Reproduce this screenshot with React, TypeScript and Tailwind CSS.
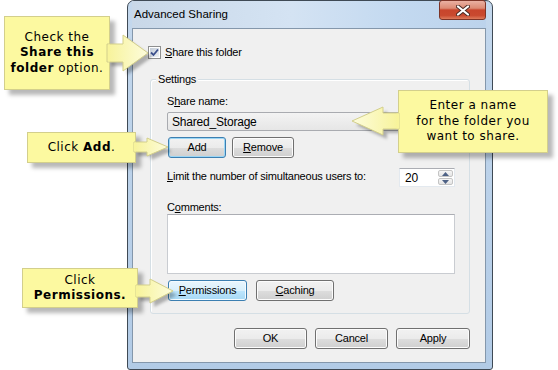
import React from "react";

const ui = "font-['Liberation_Sans',Arial,sans-serif] text-[11px] tracking-[-0.2px] text-black";
const note = "font-['DejaVu_Sans',Verdana,sans-serif] text-[12px] tracking-[0.5px] leading-[15.5px] text-black";

// arrow outlines, in page coordinates
const arrows = [
  "107,44 123,44 123,35 148,53 123,71 123,62 107,62",
  "399,113 383,113 383,107 352,121 383,135 383,129 399,129",
  "134,142 147,142 147,138 168,147 147,156 147,152 134,152",
  "136,285 150,285 150,279 173,291 150,303 150,297 136,297",
];

function Btn({
  children,
  w,
  kind = "normal",
}: {
  children: React.ReactNode;
  w: string;
  kind?: "normal" | "focus" | "hover";
}) {
  const look =
    kind === "hover"
      ? "border-[#3c7fb1] bg-[linear-gradient(#eaf6fd,#d9f0fc_50%,#bee6fd_51%,#a7d9f5)] shadow-[inset_0_0_0_1px_#f4fbff]"
      : kind === "focus"
        ? "border-[#3c7fb1] bg-[linear-gradient(#f2f2f2,#ebebeb_50%,#dddddd_51%,#cfcfcf)] shadow-[inset_0_0_0_1px_#9bd6f5]"
        : "border-[#707070] bg-[linear-gradient(#f2f2f2,#ebebeb_50%,#dddddd_51%,#cfcfcf)] shadow-[inset_0_0_0_1px_#fcfcfc]";
  return (
    <div className={`flex h-[21px] ${w} items-center justify-center rounded-[3px] border ${look}`}>
      {children}
    </div>
  );
}

function Checkbox() {
  return (
    <div className="flex h-[13px] w-[13px] items-center justify-center border border-[#8e8f8f] bg-white p-[1px]">
      <div className="flex h-full w-full items-center justify-center bg-[linear-gradient(135deg,#c3ccd8,#eef1f4)]">
        <svg width="9" height="9" viewBox="0 0 9 9">
          <path d="M1 4.5 L3.5 7 L8 1.5" fill="none" stroke="#3b4f8c" strokeWidth="1.8" />
        </svg>
      </div>
    </div>
  );
}

function Spinner() {
  return (
    <div className="flex h-[19px] w-[56px] items-stretch border border-[#e3e9ef] border-t-[#abadb3] bg-white">
      <div className="flex flex-1 items-center pl-[5px] text-[12px]">20</div>
      <div className="flex w-[17px] flex-col gap-[1px] p-[1px]">
        <div className="flex flex-1 items-center justify-center rounded-[2px] border border-[#c4c4c4] bg-[linear-gradient(#f6f6f6,#e4e4e4)]">
          <svg width="7" height="4" viewBox="0 0 7 4">
            <path d="M0 4 L3.5 0 L7 4 Z" fill="#4d6185" />
          </svg>
        </div>
        <div className="flex flex-1 items-center justify-center rounded-[2px] border border-[#c4c4c4] bg-[linear-gradient(#f6f6f6,#e4e4e4)]">
          <svg width="7" height="4" viewBox="0 0 7 4">
            <path d="M0 0 L7 0 L3.5 4 Z" fill="#4d6185" />
          </svg>
        </div>
      </div>
    </div>
  );
}

function Window() {
  return (
    <div className={`absolute left-[127px] top-0 flex h-[370px] w-[366px] flex-col rounded-t-[7px] rounded-b-[3px] border border-[#3f4a55] bg-[linear-gradient(180deg,#c4d8ed,#b2cbe6)] pl-[4px] pr-[6px] pb-[6px] ${ui}`}>
      {/* title bar */}
      <div className="flex h-[27px] items-center bg-[linear-gradient(90deg,#c9d8e8,#d4e3f3_45%,#c3d9f0_75%,#bcd3ec)] pl-[2px] text-[11.5px] tracking-normal">
        Advanced Sharing
      </div>
      <div className="absolute right-[6px] top-[-1px] flex h-[20px] w-[47px] items-center justify-center rounded-[3px] border border-[#7d3427] bg-[linear-gradient(#eab0a2,#dc8a74_40%,#c8452c_50%,#c9492f_80%,#de7b5c)]">
        <svg width="14" height="11" viewBox="0 0 14 11">
          <path d="M2 1.5 L12 9.5 M12 1.5 L2 9.5" stroke="#4a2a24" strokeWidth="4" strokeLinecap="round" />
          <path d="M2 1.5 L12 9.5 M12 1.5 L2 9.5" stroke="#ffffff" strokeWidth="2.2" strokeLinecap="round" />
        </svg>
      </div>

      {/* client area */}
      <div className="flex flex-1 flex-col border border-[#8497ab] bg-[#f0f0f0] pt-[17px]">
        <div className="flex h-[13px] items-center gap-[4px] pl-[15px] leading-[13px]">
          <Checkbox />
          <span>
            <span className="underline">S</span>hare this folder
          </span>
        </div>

        {/* Settings group */}
        <div className="relative ml-[17px] mt-[20px] flex h-[235px] w-[320px] flex-col rounded-[3px] border border-[#d5dfe5] pl-[16px] pt-[14px] shadow-[inset_1px_1px_0_#ffffff]">
          <span className="absolute left-[5px] top-[-8px] bg-[#f0f0f0] px-[2px] leading-[14px]">Settings</span>
          <div className="leading-[14px]">
            S<span className="underline">h</span>are name:
          </div>
          <div className="mt-[4px] flex h-[19px] w-[288px] items-center rounded-[2px] border border-[#a9abb0] bg-[linear-gradient(#f3f3f3,#e6e6e6)] pl-[4px] text-[12px] tracking-[-0.2px]">
            Shared_Storage
          </div>
          <div className="ml-[1px] mt-[6px] flex gap-[6px]">
            <Btn w="w-[58px]" kind="focus">Add</Btn>
            <Btn w="w-[62px]">
              <span>
                <span className="underline">R</span>emove
              </span>
            </Btn>
          </div>
          <div className="mt-[10px] flex w-[288px] items-start justify-between">
            <span className="mt-[1px] leading-[14px]">
              <span className="underline">L</span>imit the number of simultaneous users to:
            </span>
            <Spinner />
          </div>
          <div className="mt-[14px] h-[13px] leading-[13px]">
            C<span className="underline">o</span>mments:
          </div>
          <div className="h-[60px] w-[288px] border border-[#c9ccd1] border-t-[#abadb3] bg-white" />
          <div className="ml-[1px] mt-[6px] flex gap-[9px]">
            <Btn w="w-[79px]" kind="hover">
              <span>
                <span className="underline">P</span>ermissions
              </span>
            </Btn>
            <Btn w="w-[78px]">
              <span>
                <span className="underline">C</span>aching
              </span>
            </Btn>
          </div>
        </div>

        <div className="mt-[14px] flex justify-end gap-[8px] pr-[15px]">
          <Btn w="w-[73px]">OK</Btn>
          <Btn w="w-[73px]">Cancel</Btn>
          <Btn w="w-[74px]">Apply</Btn>
        </div>
      </div>
    </div>
  );
}

function Note({ className, children }: { className: string; children: React.ReactNode }) {
  return (
    <div className={`absolute flex flex-col items-center justify-center border border-[#d3cf8c] bg-[#fcf9a0] text-center shadow-[5px_5px_4px_rgba(0,0,0,0.28)] ${note} ${className}`}>
      {children}
    </div>
  );
}

export default function App() {
  return (
    <div className="relative h-[370px] w-[558px] overflow-hidden bg-white">
      <Window />

      {/* arrow shadows sit under the notes */}
      <svg className="pointer-events-none absolute left-0 top-0" width="558" height="370">
        <defs>
          <filter id="soft" x="-20%" y="-20%" width="140%" height="140%">
            <feGaussianBlur stdDeviation="1.6" />
          </filter>
        </defs>
        {arrows.map((p) => (
          <polygon key={p} points={p} transform="translate(4 4)" fill="rgba(0,0,0,0.28)" filter="url(#soft)" />
        ))}
      </svg>

      <Note className="left-[4px] top-[16px] h-[74px] w-[106px]">
        <div>Check the</div>
        <div className="font-bold">Share this</div>
        <div>
          <b>folder</b> option.
        </div>
      </Note>
      <Note className="left-[398px] top-[90px] h-[63px] w-[150px]">
        <div>Enter a name</div>
        <div>for the folder you</div>
        <div>want to share.</div>
      </Note>
      <Note className="left-[27px] top-[132px] h-[31px] w-[109px]">
        <div>
          Click <b>Add</b>.
        </div>
      </Note>
      <Note className="left-[22px] top-[268px] h-[40px] w-[116px]">
        <div>Click</div>
        <div className="font-bold">Permissions.</div>
      </Note>

      <svg className="pointer-events-none absolute left-0 top-0" width="558" height="370">
        <defs>
          <linearGradient id="a0" x1="0" x2="1" y1="0" y2="0">
            <stop offset="0" stopColor="#f7f39a" />
            <stop offset="1" stopColor="#fdfcdc" />
          </linearGradient>
          <linearGradient id="a1" x1="1" x2="0" y1="0" y2="0">
            <stop offset="0" stopColor="#f7f39a" />
            <stop offset="1" stopColor="#fdfcdc" />
          </linearGradient>
        </defs>
        {arrows.map((p, i) => (
          <polygon key={p} points={p} fill={i === 1 ? "url(#a1)" : "url(#a0)"} stroke="#d3cf8c" strokeWidth="1" />
        ))}
        {/* hide the outline where each stem meets its note */}
        <rect x="108" y="44.5" width="2" height="17" fill="#f8f49b" />
        <rect x="396.5" y="113.5" width="2.5" height="15" fill="#f8f49b" />
        <rect x="134" y="142.5" width="2" height="9" fill="#f8f49b" />
        <rect x="136" y="285.5" width="2" height="11" fill="#f8f49b" />
      </svg>
    </div>
  );
}
